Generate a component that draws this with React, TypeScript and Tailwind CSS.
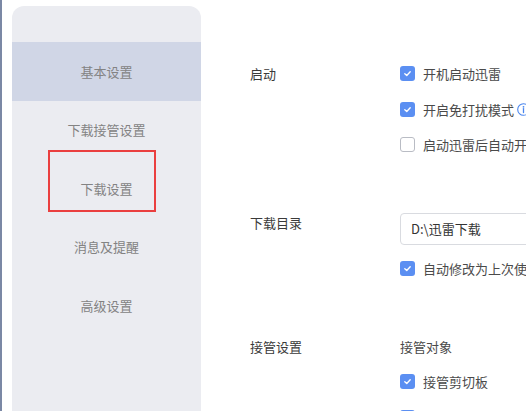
import React from "react";

const font = { fontFamily: '"Noto Sans CJK SC", "Noto Sans", sans-serif' };

function Check({ checked }: { checked: boolean }) {
  if (!checked) {
    return <span className="w-[15px] h-[15px] shrink-0 rounded-[3px] border border-[#b9bcc4] bg-white" />;
  }
  return (
    <span className="w-[15px] h-[15px] shrink-0 rounded-[3px] bg-[#5b8ff2] flex items-center justify-center">
      <svg width="9" height="9" viewBox="0 0 10 10" fill="none">
        <path d="M2 5.2 L4.2 7.2 L8 3" stroke="white" strokeWidth="1.5" strokeLinecap="round" strokeLinejoin="round" />
      </svg>
    </span>
  );
}

function Opt({ checked, text, children }: { checked: boolean; text: string; children?: React.ReactNode }) {
  return (
    <div className="h-[35.5px] flex items-center gap-[8px] whitespace-nowrap">
      <Check checked={checked} />
      <span className="text-[13px] text-[#4a4a4a]">{text}</span>
      {children}
    </div>
  );
}

export default function App() {
  const items = ["基本设置", "下载接管设置", "下载设置", "消息及提醒", "高级设置"];
  return (
    <div className="w-[526px] h-[411px] overflow-hidden bg-white flex" style={font}>
      <div className="w-[2px] h-full bg-[#7b88a5] shrink-0" />
      <div className="pl-[10px] pt-[6px] shrink-0">
        <div className="relative w-[189px] h-[420px] rounded-t-[12px] bg-[#ebecf1] pt-[36px]">
          {items.map((t, i) => (
            <div
              key={t}
              className={`h-[58.5px] flex items-center justify-center text-[13px] text-[#838383] ${i === 0 ? "bg-[#d0d6e6]" : ""}`}
            >
              {t}
            </div>
          ))}
          <div className="absolute left-[36px] top-[144px] w-[108px] h-[62px] border-2 border-[#ea3f3f]" />
        </div>
      </div>
      <div className="pl-[49px] flex-1 min-w-0">
        <div className="pt-[56px] flex">
          <div className="w-[150px] shrink-0 h-[35.5px] flex items-center text-[13px] text-[#3a3a3a]">启动</div>
          <div>
            <Opt checked text="开机启动迅雷" />
            <Opt checked text="开启免打扰模式">
              <svg className="-ml-[5px] shrink-0" width="13" height="13" viewBox="0 0 13 13" fill="none">
                <circle cx="6.5" cy="6.5" r="5.8" stroke="#4a86ee" strokeWidth="1.1" />
                <circle cx="6.5" cy="3.8" r="0.9" fill="#4a86ee" />
                <path d="M6.5 5.6 V9.6" stroke="#4a86ee" strokeWidth="1.3" strokeLinecap="round" />
              </svg>
            </Opt>
            <Opt checked={false} text="启动迅雷后自动开始未完成的任务" />
          </div>
        </div>
        <div className="mt-[50px] flex">
          <div className="w-[150px] shrink-0 h-[20px] flex items-center text-[13px] text-[#3a3a3a]">下载目录</div>
          <div>
            <div className="w-[300px] h-[32px] rounded-[4px] border border-[#d9dbe0] flex items-center px-[10px] text-[13px] text-[#333] whitespace-nowrap">
              D:\迅雷下载
            </div>
            <div className="mt-[6px]">
              <Opt checked text="自动修改为上次使用的目录" />
            </div>
          </div>
        </div>
        <div className="mt-[43px] flex">
          <div className="w-[150px] shrink-0 h-[35px] flex items-center text-[13px] text-[#3a3a3a]">接管设置</div>
          <div>
            <div className="h-[35px] flex items-center text-[13px] text-[#4a4a4a]">接管对象</div>
            <Opt checked text="接管剪切板" />
            <Opt checked text="接管浏览器" />
          </div>
        </div>
      </div>
    </div>
  );
}
